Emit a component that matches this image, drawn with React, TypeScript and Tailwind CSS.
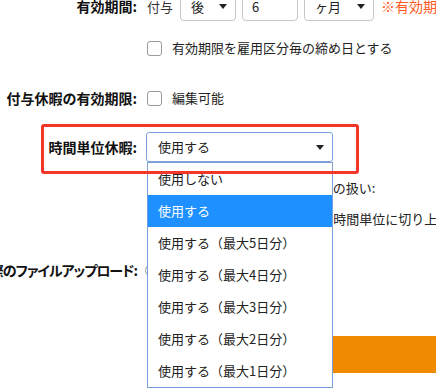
const Label = ({ children }: { children: React.ReactNode }) => (
  <div className="flex w-[137px] shrink-0 justify-end whitespace-nowrap text-[14px] font-bold text-[#111]">
    {children}
  </div>
);

const Caret = () => (
  <svg width="8" height="5" viewBox="0 0 8 5" className="shrink-0">
    <path d="M0 0 H8 L4 5 Z" fill="#222" />
  </svg>
);

const Checkbox = () => (
  <span className="inline-block h-[15px] w-[15px] shrink-0 rounded-[3px] border border-[#9a9a9a] bg-white" />
);

const App = () => {
  const options = [
    "使用しない",
    "使用する",
    "使用する（最大5日分）",
    "使用する（最大4日分）",
    "使用する（最大3日分）",
    "使用する（最大2日分）",
    "使用する（最大1日分）",
  ];

  return (
    <div className="relative h-[391px] w-[436px] overflow-hidden bg-white font-['Noto_Sans_CJK_JP',sans-serif] text-[13px] text-[#222]">
      <div className="-mt-[8px] flex flex-col">
        {/* 有効期間 */}
        <div className="flex h-[29px] items-center">
          <Label>有効期間:</Label>
          <div className="ml-[10px] flex items-center whitespace-nowrap">
            <span className="text-[#333]">付与</span>
            <div className="ml-[7px] flex h-[29px] w-[56px] items-center justify-between rounded-[4px] border border-[#c6c6c6] pl-[10px] pr-[8px]">
              <span>後</span>
              <Caret />
            </div>
            <div className="ml-[6px] flex h-[29px] w-[56px] items-center rounded-[4px] border border-[#c6c6c6] pl-[9px]">
              6
            </div>
            <div className="ml-[6px] flex h-[29px] w-[70px] items-center justify-between rounded-[4px] border border-[#c6c6c6] pl-[10px] pr-[8px]">
              <span>ヶ月</span>
              <Caret />
            </div>
            <span className="ml-[7px] text-[14px] text-[#ff5a1e]">※有効期限は付与日から起算</span>
          </div>
        </div>

        <div className="mt-[17px] flex h-[20px] items-center">
          <div className="w-[137px] shrink-0" />
          <div className="ml-[10px] flex items-center gap-[10px] whitespace-nowrap">
            <Checkbox />
            <span>有効期限を雇用区分毎の締め日とする</span>
          </div>
        </div>

        <div className="mt-[30px] flex h-[20px] items-center">
          <Label>付与休暇の有効期限:</Label>
          <div className="ml-[10px] flex items-center gap-[10px] whitespace-nowrap">
            <Checkbox />
            <span>編集可能</span>
          </div>
        </div>

        {/* 時間単位休暇 */}
        <div className="mt-[24px] flex h-[30px] items-center">
          <Label>時間単位休暇:</Label>
          <div className="ml-[9px] flex h-[30px] w-[187px] items-center justify-between rounded-[3px] border border-[#7ea2db] pl-[11px] pr-[8px]">
            <span>使用する</span>
            <Caret />
          </div>
        </div>

        <div className="mt-[16px] flex h-[20px] items-center">
          <div className="w-[137px] shrink-0" />
          <span className="ml-[20px] whitespace-nowrap">残日数が1日未満となった場合の扱い:</span>
        </div>

        <div className="mt-[11px] flex h-[20px] items-center">
          <div className="w-[137px] shrink-0" />
          <div className="ml-[28px] flex items-center gap-[5px] whitespace-nowrap">
            <span className="inline-block h-[13px] w-[13px] rounded-full border border-[#999]" />
            <span>1日未満の端数がある場合時間単位に切り上げる</span>
          </div>
        </div>

        <div className="mt-[31px] flex h-[20px] items-center">
          <Label>
            <span className="tracking-[-1px] [font-feature-settings:'palt']">申請の際のファイルアップロード:</span>
          </Label>
          <div className="ml-[8px] flex items-center gap-[5px] whitespace-nowrap">
            <span className="inline-block h-[13px] w-[13px] rounded-full border border-[#999]" />
            <span>使用する</span>
          </div>
        </div>

        <div className="mt-[56px] flex">
          <div className="ml-[190px] flex h-[37px] w-[300px] items-center bg-[#f08a00] pl-[30px] text-[14px] font-bold text-white">
            保存
          </div>
        </div>
      </div>

      {/* open dropdown list */}
      <div className="absolute left-[147px] top-[162px] w-[186px] border border-[#7d9fd9] bg-white">
        {options.map((opt, i) => (
          <div
            key={opt}
            className={
              i === 1
                ? "flex h-[32px] items-center bg-[#1e90ff] pl-[10px] text-white"
                : "flex h-[32px] items-center pl-[10px] text-[#222]"
            }
          >
            {opt}
          </div>
        ))}
      </div>

      {/* annotation box */}
      <div className="absolute left-[41px] top-[124px] h-[50px] w-[318px] rounded-[3px] border-[3px] border-[#f4362a]" />
    </div>
  );
};

export default App;
